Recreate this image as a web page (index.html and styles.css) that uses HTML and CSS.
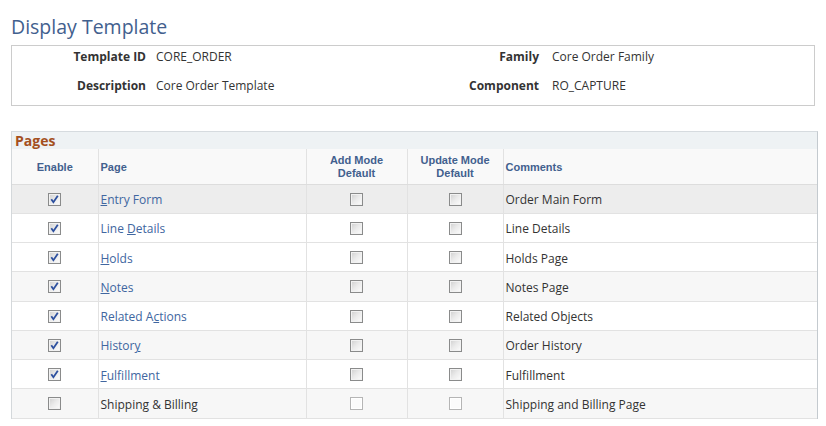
FILE: index.html
```html
<!DOCTYPE html>
<html>
<head>
<meta charset="utf-8">
<link rel="stylesheet" href="styles.css">
</head>
<body>
<h1 class="title">Display Template</h1>
<div class="info">
  <div class="lbl">Template ID</div><div class="val">CORE_ORDER</div>
  <div class="lbl">Family</div><div class="val val2">Core Order Family</div>
  <div class="lbl">Description</div><div class="val">Core Order Template</div>
  <div class="lbl">Component</div><div class="val val2">RO_CAPTURE</div>
</div>
<div class="pages">
  <div class="band">Pages</div>
  <table class="grid">
    <colgroup>
      <col class="w-enable"><col class="w-page"><col class="w-add"><col class="w-upd"><col class="w-com">
    </colgroup>
    <thead>
      <tr>
        <th class="c">Enable</th>
        <th class="l">Page</th>
        <th class="c">Add Mode<br>Default</th>
        <th class="c">Update Mode<br>Default</th>
        <th class="l">Comments</th>
      </tr>
    </thead>
    <tbody>
      <tr class="active">
        <td class="c"><span class="cb on"><svg viewBox="0 0 11 11"><path d="M2.3 5.2 L4.4 8.2 L8.8 1.8"/></svg></span></td>
        <td><a class="lnk"><u>E</u>ntry Form</a></td>
        <td class="c"><span class="cb"></span></td>
        <td class="c"><span class="cb"></span></td>
        <td>Order Main Form</td>
      </tr>
      <tr class="w">
        <td class="c"><span class="cb on"><svg viewBox="0 0 11 11"><path d="M2.3 5.2 L4.4 8.2 L8.8 1.8"/></svg></span></td>
        <td><a class="lnk">Line <u>D</u>etails</a></td>
        <td class="c"><span class="cb"></span></td>
        <td class="c"><span class="cb"></span></td>
        <td>Line Details</td>
      </tr>
      <tr class="w">
        <td class="c"><span class="cb on"><svg viewBox="0 0 11 11"><path d="M2.3 5.2 L4.4 8.2 L8.8 1.8"/></svg></span></td>
        <td><a class="lnk"><u>H</u>olds</a></td>
        <td class="c"><span class="cb"></span></td>
        <td class="c"><span class="cb"></span></td>
        <td>Holds Page</td>
      </tr>
      <tr class="g">
        <td class="c"><span class="cb on"><svg viewBox="0 0 11 11"><path d="M2.3 5.2 L4.4 8.2 L8.8 1.8"/></svg></span></td>
        <td><a class="lnk"><u>N</u>otes</a></td>
        <td class="c"><span class="cb"></span></td>
        <td class="c"><span class="cb"></span></td>
        <td>Notes Page</td>
      </tr>
      <tr class="w">
        <td class="c"><span class="cb on"><svg viewBox="0 0 11 11"><path d="M2.3 5.2 L4.4 8.2 L8.8 1.8"/></svg></span></td>
        <td><a class="lnk">Related A<u>c</u>tions</a></td>
        <td class="c"><span class="cb"></span></td>
        <td class="c"><span class="cb"></span></td>
        <td>Related Objects</td>
      </tr>
      <tr class="g">
        <td class="c"><span class="cb on"><svg viewBox="0 0 11 11"><path d="M2.3 5.2 L4.4 8.2 L8.8 1.8"/></svg></span></td>
        <td><a class="lnk">Histor<u>y</u></a></td>
        <td class="c"><span class="cb"></span></td>
        <td class="c"><span class="cb"></span></td>
        <td>Order History</td>
      </tr>
      <tr class="w">
        <td class="c"><span class="cb on"><svg viewBox="0 0 11 11"><path d="M2.3 5.2 L4.4 8.2 L8.8 1.8"/></svg></span></td>
        <td><a class="lnk"><u>F</u>ulfillment</a></td>
        <td class="c"><span class="cb"></span></td>
        <td class="c"><span class="cb"></span></td>
        <td>Fulfillment</td>
      </tr>
      <tr class="g">
        <td class="c"><span class="cb"></span></td>
        <td>Shipping &amp; Billing</td>
        <td class="c"><span class="cb dis"></span></td>
        <td class="c"><span class="cb dis"></span></td>
        <td>Shipping and Billing Page</td>
      </tr>
    </tbody>
  </table>
</div>
</body>
</html>
```

FILE: styles.css
```css
html, body {
  margin: 0;
  padding: 0;
  background: #ffffff;
}
body {
  font-family: "Open Sans", "Noto Sans", sans-serif;
  font-size: 12px;
  color: #333333;
}
.title {
  margin: 0 0 5px 11px;
  padding-top: 14px;
  font-size: 19.5px;
  line-height: 26px;
  font-weight: normal;
  color: #42608e;
}
.info {
  box-sizing: border-box;
  margin-left: 11px;
  width: 804px;
  height: 61px;
  border: 1px solid #cccccc;
  padding: 1px 0 9px 0;
  display: grid;
  grid-template-columns: 134px 264px 129px 1fr;
  grid-auto-rows: 20px;
  row-gap: 9px;
  line-height: 20px;
}
.lbl {
  text-align: right;
  font-weight: bold;
  color: #333333;
  white-space: nowrap;
}
.val {
  padding-left: 10px;
  white-space: nowrap;
}
.val2 {
  padding-left: 13px;
}
.pages {
  box-sizing: border-box;
  margin: 25px 0 0 11px;
  width: 807px;
  border-left: 1px solid #d4d8db;
  border-right: 1px solid #c4cacf;
  border-top: 1px solid #d6dbdf;
}
.band {
  height: 17px;
  line-height: 17px;
  background: #eef2f4;
  padding-left: 3px;
  font-size: 14px;
  font-weight: bold;
  color: #a4501e;
}
.grid {
  width: 100%;
  border-collapse: collapse;
  table-layout: fixed;
}
.w-enable { width: 86px; }
.w-page { width: 208px; }
.w-add { width: 101px; }
.w-upd { width: 96px; }
.w-com { width: 314px; }
.grid th {
  height: 35px;
  padding: 2px 2px 0 2px;
  box-sizing: border-box;
  background: #f9f9f9;
  font-family: "Liberation Sans", Arial, sans-serif;
  font-size: 11px;
  line-height: 13px;
  font-weight: bold;
  color: #42608e;
  border-right: 1px solid #e2e2e2;
  border-bottom: 1px solid #dddddd;
  vertical-align: middle;
}
.grid td {
  height: 26.25px;
  padding: 2px 2px 0 2px;
  border-right: 1px solid #e2e2e2;
  border-bottom: 1px solid #e2e2e2;
  vertical-align: middle;
  white-space: nowrap;
}
.grid th:last-child, .grid td:last-child {
  border-right: none;
}
.grid td.c {
  padding-top: 1px;
}
.grid .c { text-align: center; }
.grid .l { text-align: left; }
.grid tr.active td { background: #ededed; }
.grid tr.w td { background: #ffffff; }
.grid tr.g td { background: #f7f7f7; }
.lnk {
  color: #4066a0;
  text-decoration: none;
}
.lnk u {
  text-decoration: underline;
}
.cb {
  display: block;
  margin: 0 auto;
  box-sizing: border-box;
  width: 13px;
  height: 13px;
  border: 1px solid #8a8b8b;
  box-shadow: inset 0 0 0 1px #f2f2f2;
  background: linear-gradient(135deg, #cfcfcf 0%, #ebebeb 50%, #fdfdfd 100%);
}
.cb svg {
  display: block;
  width: 11px;
  height: 11px;
}
.cb svg path {
  fill: none;
  stroke: #2c4f9e;
  stroke-width: 1.8;
}
.cb.dis {
  border-color: #b5b5b5;
  background: #fbfbfb;
  box-shadow: inset 0 0 0 1px #ffffff;
}
```
